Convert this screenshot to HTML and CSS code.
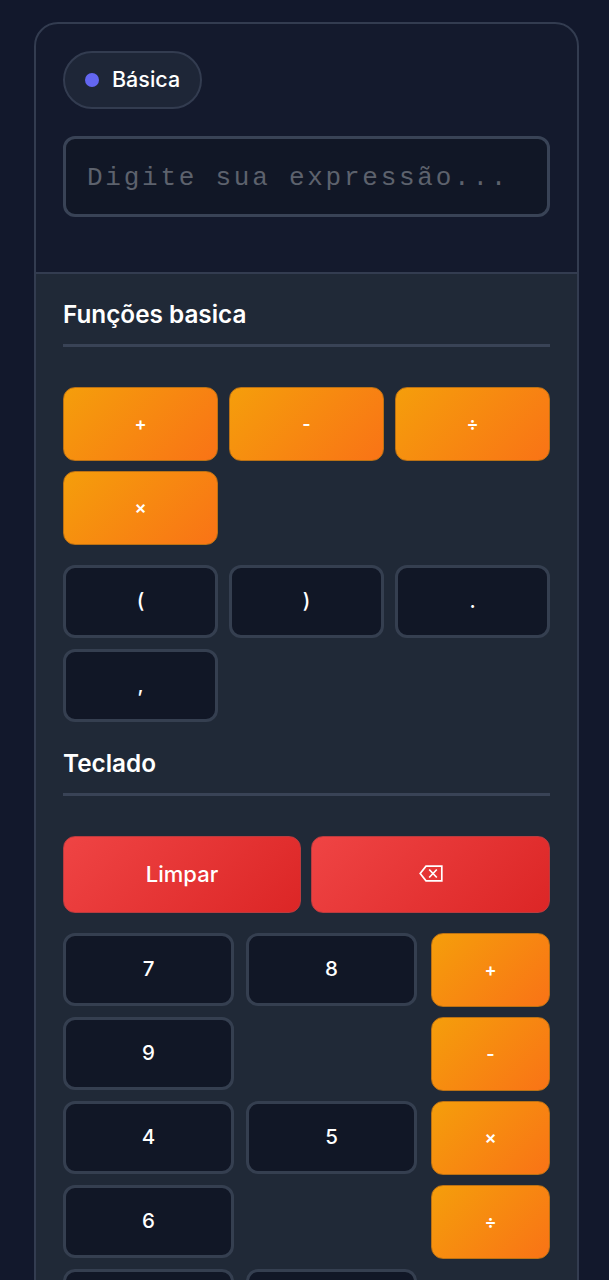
FILE: index.html
```html
<!DOCTYPE html>
<html lang="pt-BR">
<head>
<meta charset="utf-8">
<title>Calculadora</title>
<link rel="stylesheet" href="styles.css">
</head>
<body>
<main class="card">
  <header class="top">
    <div class="pill"><span class="dot"></span><span class="pill-text">Básica</span></div>
    <input class="expr" type="text" placeholder="Digite sua expressão...">
  </header>
  <section class="panel">
    <h2 class="title">Funções basica</h2>
    <div class="grid3 ops">
      <button class="key op">+</button>
      <button class="key op">-</button>
      <button class="key op">÷</button>
      <button class="key op">×</button>
    </div>
    <div class="grid3 syms">
      <button class="key dark">(</button>
      <button class="key dark">)</button>
      <button class="key dark">.</button>
      <button class="key dark">,</button>
    </div>
    <h2 class="title second">Teclado</h2>
    <div class="clear-row">
      <button class="key red">Limpar</button>
      <button class="key red" aria-label="Apagar">
        <svg class="bksp" viewBox="0 0 24 17" width="24" height="17" fill="none" stroke="currentColor" stroke-width="1.7" stroke-linejoin="miter">
          <path d="M7 1.2H22.8V15.8H7L1.2 8.5Z"/>
          <path d="M10.2 4.5L17.8 12.5M17.8 4.5L10.2 12.5"/>
        </svg>
      </button>
    </div>
    <div class="pad">
      <div class="nums">
        <button class="key dark">7</button>
        <button class="key dark">8</button>
        <button class="key dark">9</button>
        <span></span>
        <button class="key dark">4</button>
        <button class="key dark">5</button>
        <button class="key dark">6</button>
        <span></span>
        <button class="key dark">1</button>
        <button class="key dark">2</button>
      </div>
      <div class="side">
        <button class="key op">+</button>
        <button class="key op">-</button>
        <button class="key op">×</button>
        <button class="key op">÷</button>
      </div>
    </div>
  </section>
</main>
</body>
</html>
```

FILE: styles.css
```css
* { box-sizing: border-box; }
html, body { margin: 0; height: 1280px; overflow: hidden; }
body {
  background: #12182c;
  font-family: Inter, "Liberation Sans", sans-serif;
  color: #fff;
  padding: 22px 30px 0 34px;
}
.card {
  border: 2px solid #333c50;
  border-radius: 24px;
  overflow: hidden;
  background: #141a2d;
}
.top { padding: 27px 27px 55px; }
.pill {
  display: inline-flex;
  align-items: center;
  gap: 13px;
  height: 58px;
  width: 139px;
  padding-left: 20px;
  border: 2px solid #333c50;
  border-radius: 29px;
  background: #1e2637;
  font-size: 21.5px;
  font-weight: 500;
}
.pill-text { margin-top: -2px; }
.dot { width: 14px; height: 14px; border-radius: 50%; background: #6366f1; }
.expr {
  display: block;
  width: 487px;
  height: 81px;
  margin-top: 27px;
  padding: 2px 21px 0;
  border: 3px solid #394356;
  border-radius: 12px;
  background: #111726;
  color: #fff;
  font-family: "Liberation Mono", monospace;
  font-size: 26px;
  letter-spacing: 2.75px;
  outline: none;
}
.expr::placeholder { color: #5d626d; opacity: 1; }
.panel {
  background: #202937;
  border-top: 2px solid #333c50;
  padding: 26px 27px 0;
}
.title {
  margin: 0;
  height: 47px;
  padding-bottom: 14px;
  border-bottom: 3px solid #394356;
  font-size: 24.3px;
  line-height: 29px;
  font-weight: 600;
}
.second { margin-top: 27px; }
.key {
  display: flex;
  align-items: center;
  justify-content: center;
  border-radius: 12px;
  color: #fff;
  font-family: inherit;
  font-weight: 500;
  padding: 0 0 2px;
}
.op {
  height: 74px;
  border: 1px solid #bb7114;
  background: linear-gradient(135deg, #f59e0b, #f97316);
  font-size: 18px;
  font-weight: 600;
}
.dark {
  height: 73px;
  border: 3px solid #353f50;
  background: #111726;
  font-size: 20.5px;
}
.red {
  height: 77px;
  border: 1px solid #b93b3f;
  background: linear-gradient(135deg, #ef4444, #dc2626);
  font-size: 22px;
}
.bksp { display: block; }
.grid3 { display: grid; grid-template-columns: repeat(3, 155px); gap: 10px 11px; }
.ops { margin-top: 40px; }
.syms { margin-top: 20px; row-gap: 11px; }
.clear-row { display: grid; grid-template-columns: 238px 239px; gap: 10px; margin-top: 40px; }
.pad { display: flex; gap: 14px; margin-top: 20px; align-items: flex-start; }
.nums { display: grid; grid-template-columns: 171px 171px; gap: 11px 12px; width: 354px; }
.nums span { display: block; height: 73px; }
.side { display: grid; grid-template-columns: 119px; row-gap: 10px; }
```
